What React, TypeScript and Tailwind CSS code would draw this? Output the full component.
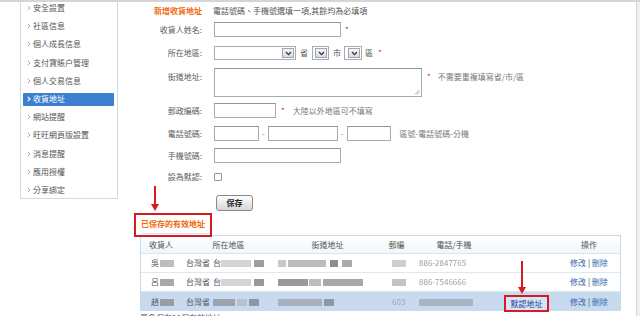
import React from "react";

const navItems = [
  "安全設置",
  "社區信息",
  "個人成長信息",
  "支付寶賬户管理",
  "個人交易信息",
  "收貨地址",
  "網站提醒",
  "旺旺網頁版設置",
  "消息提醒",
  "應用授權",
  "分享綁定",
];

function Chevron({ white }: { white?: boolean }) {
  return (
    <svg width="4" height="6" viewBox="0 0 4 6" className="shrink-0">
      <path d="M0.8 0.8 L3 3 L0.8 5.2" fill="none" stroke={white ? "#ffffff" : "#9aa3ad"} strokeWidth={white ? 1.2 : 0.9} />
    </svg>
  );
}

function SelectBox({ w }: { w: number }) {
  return (
    <div className="h-[14px] border border-[#a7acb3] bg-white flex justify-end items-stretch p-[1px]" style={{ width: w }}>
      <div className="w-[12px] border border-[#9ea6b0] bg-gradient-to-b from-[#f5f6f8] to-[#d9dde3] flex items-center justify-center">
        <svg width="7" height="5" viewBox="0 0 7 5">
          <path d="M1 1 L3.5 3.6 L6 1" fill="none" stroke="#333" strokeWidth="1.3" />
        </svg>
      </div>
    </div>
  );
}

function Input({ w }: { w: number }) {
  return <div className="h-[15px] border border-[#a5abb3] border-t-[#8f959c] bg-white" style={{ width: w }} />;
}

function Star() {
  return <span className="text-[#e02020] text-[8px]">*</span>;
}

function Blur({ w, c = "#c4c4c4", ml = 0 }: { w: number; c?: string; ml?: number }) {
  return <span className="inline-block h-[7px] blur-[0.6px]" style={{ width: w, background: c, marginLeft: ml }} />;
}

function Label({ children, top }: { children: React.ReactNode; top?: boolean }) {
  return (
    <div className={`w-[85px] shrink-0 text-right text-[#5a5a5a] pr-[1px] ${top ? "pt-[5px]" : ""}`}>{children}</div>
  );
}

function Links() {
  return (
    <span className="text-[#3a68ad]">
      修改 <span className="text-[#444]">|</span> 刪除
    </span>
  );
}

const cols = "grid grid-cols-[40px_95px_103px_35px_90px_52px_66px]";

export default function App() {
  return (
    <div className="w-[640px] h-[316px] overflow-hidden bg-white border-t-2 border-[#d3d5d8] flex font-['Noto_Sans_CJK_TC','Noto_Sans',sans-serif] text-[8px] leading-none text-[#555]">
      <div className="w-[20px] shrink-0" />
      {/* sidebar */}
      <aside className="w-[98px] h-[197px] shrink-0 border-x border-b border-[#d3dae1] overflow-hidden">
        <ul className="-mt-[3px] flex flex-col">
          {navItems.map((t) => {
            const active = t === "收貨地址";
            return (
              <li key={t} className="h-[18.2px] shrink-0 flex items-center px-[2px]">
                {active ? (
                  <div className="w-[91px] h-[13px] bg-[#3c7fcf] rounded-[1px] flex items-center gap-[2px] pl-[4px] text-white">
                    <Chevron white />
                    <span>{t}</span>
                  </div>
                ) : (
                  <div className="flex items-center gap-[2px] pl-[4px] text-[#555]">
                    <Chevron />
                    <span>{t}</span>
                  </div>
                )}
              </li>
            );
          })}
        </ul>
      </aside>

      {/* main */}
      <main className="flex-1 relative">
        {/* title */}
        <div className="mt-[2px] h-[14px] flex items-center">
          <Label>
            <span className="text-[#ef6a0d] font-bold">新增收貨地址</span>
          </Label>
          <span className="ml-[10px] text-[#555]">電話號碼、手機號選填一項,其餘均為必填項</span>
        </div>
        {/* name */}
        <div className="mt-[4px] h-[15px] flex items-center">
          <Label>收貨人姓名:</Label>
          <div className="ml-[11px] flex items-center gap-[4px]">
            <Input w={127} />
            <Star />
          </div>
        </div>
        {/* region */}
        <div className="mt-[9px] h-[14px] flex items-center">
          <Label>所在地區:</Label>
          <div className="ml-[11px] flex items-center">
            <SelectBox w={82} />
            <span className="ml-[4px] text-[#555]">省</span>
            <div className="ml-[4px]"><SelectBox w={17} /></div>
            <span className="ml-[4px] text-[#555]">市</span>
            <div className="ml-[3px]"><SelectBox w={18} /></div>
            <span className="ml-[3px] text-[#555]">區</span>
            <span className="ml-[5px]"><Star /></span>
          </div>
        </div>
        {/* street */}
        <div className="mt-[8px] h-[29px] flex items-start">
          <Label top>街道地址:</Label>
          <div className="ml-[11px] flex items-start">
            <div className="relative w-[208px] h-[29px] border border-[#a5abb3] border-t-[#8f959c] bg-white">
              <svg width="6" height="6" viewBox="0 0 6 6" className="absolute right-[1px] bottom-[1px]">
                <path d="M1 5.5 L5.5 1 M3 5.5 L5.5 3" stroke="#999" strokeWidth="0.8" />
              </svg>
            </div>
            <span className="ml-[5px] mt-[5px]"><Star /></span>
            <span className="ml-[7px] mt-[5px] text-[#777]">不需要重複填寫省/市/區</span>
          </div>
        </div>
        {/* zip */}
        <div className="mt-[6px] h-[15px] flex items-center">
          <Label>郵政編碼:</Label>
          <div className="ml-[11px] flex items-center">
            <Input w={62} />
            <span className="ml-[5px]"><Star /></span>
            <span className="ml-[8px] text-[#777]">大陸以外地區可不填寫</span>
          </div>
        </div>
        {/* phone */}
        <div className="mt-[8px] h-[15px] flex items-center">
          <Label>電話號碼:</Label>
          <div className="ml-[11px] flex items-center">
            <Input w={45} />
            <span className="mx-[3px] text-[#777]">-</span>
            <Input w={70} />
            <span className="mx-[3px] text-[#777]">-</span>
            <Input w={44} />
            <span className="ml-[9px] text-[#777]">區號-電話號碼-分機</span>
          </div>
        </div>
        {/* mobile */}
        <div className="mt-[7px] h-[15px] flex items-center">
          <Label>手機號碼:</Label>
          <div className="ml-[11px]">
            <Input w={127} />
          </div>
        </div>
        {/* default */}
        <div className="mt-[7px] h-[14px] flex items-center">
          <Label>設為默認:</Label>
          <div className="ml-[11px] w-[8px] h-[8px] border border-[#8799ad] bg-white rounded-[1px]" />
        </div>
        {/* save */}
        <div className="mt-[11px] h-[16px] flex items-center">
          <div className="w-[85px]" />
          <button className="ml-[13px] w-[37px] h-[16px] rounded-[3px] border border-[#8a8a8a] bg-gradient-to-b from-[#ffffff] to-[#d6d6d6] text-[8px] font-bold text-[#222] leading-none">
            保存
          </button>
        </div>

        {/* tab */}
        <div className="mt-[2px] ml-[16px] w-[78px] h-[22px] relative flex items-center justify-center">
          <span className="text-[#ef6a0d] font-bold">已保存的有效地址</span>
          <div className="absolute left-[8px] right-[2px] bottom-[1px] h-px bg-[#cfe0ec]" />
          <div className="absolute left-0 top-0 w-[78px] h-[24px] border-2 border-[#d51a20]" />
        </div>

        {/* table */}
        <div className="ml-[22px] w-[481px] border-x border-t border-[#c4d9e9]">
          <div className={`${cols} h-[18px] items-center bg-gradient-to-b from-[#ffffff] to-[#f1f6fa] border-b border-[#d9e6f0] text-[#505050]`}>
            <span className="text-center">收貨人</span>
            <span className="text-center">所在地區</span>
            <span className="text-center">街道地址</span>
            <span className="text-center">郵編</span>
            <span className="text-center pr-[10px]">電話/手機</span>
            <span />
            <span className="text-center">操作</span>
          </div>
          {/* row 1 */}
          <div className={`${cols} h-[19px] items-center bg-white border-b border-[#dde8f1] text-[#555]`}>
            <span className="pl-[10px] flex items-center">吳<Blur w={14} c="#bdbdbd" ml={1} /></span>
            <span className="pl-[5px] flex items-center">台灣省<span className="ml-[3px]">台</span><Blur w={30} c="#d4d4d4" /><Blur w={10} c="#9e9e9e" ml={3} /></span>
            <span className="pl-[2px] flex items-center"><Blur w={8} c="#c7c7c7" /><Blur w={38} c="#bcbcbc" ml={2} /><Blur w={8} c="#8e8e8e" ml={4} /><Blur w={10} c="#aaaaaa" ml={4} /></span>
            <span className="pl-[13px] flex items-center"><Blur w={14} c="#cfcfcf" /></span>
            <span className="pl-[5px] text-[#9a9a9a] blur-[0.5px]">886-2847765</span>
            <span />
            <span className="text-center"><Links /></span>
          </div>
          {/* row 2 */}
          <div className={`${cols} h-[19px] items-center bg-white border-b border-[#dde8f1] text-[#555]`}>
            <span className="pl-[10px] flex items-center">呂<Blur w={14} c="#a8a8a8" ml={1} /></span>
            <span className="pl-[5px] flex items-center">台灣省<span className="ml-[3px]">台</span><Blur w={30} c="#d4d4d4" /><Blur w={10} c="#9a9a9a" ml={3} /></span>
            <span className="pl-[2px] flex items-center"><Blur w={30} c="#9a9a9a" /><Blur w={12} c="#bdbdbd" ml={1} /><Blur w={40} c="#a8a8a8" ml={2} /></span>
            <span className="pl-[13px] flex items-center"><Blur w={14} c="#c3c3c3" /></span>
            <span className="pl-[5px] text-[#a0a0a0] blur-[0.5px]">886-7546666</span>
            <span />
            <span className="text-center"><Links /></span>
          </div>
          {/* row 3 */}
          <div className={`${cols} h-[19px] items-center bg-[#c7daf0] text-[#555]`}>
            <span className="pl-[10px] flex items-center">趙<Blur w={14} c="#9a9ca3" ml={1} /></span>
            <span className="pl-[5px] flex items-center">台灣省<Blur w={22} c="#9da3ad" ml={3} /><Blur w={10} c="#b7c2d0" ml={2} /><Blur w={10} c="#8f97a3" ml={2} /></span>
            <span className="pl-[2px] flex items-center"><Blur w={44} c="#a9b1bc" /><Blur w={10} c="#8f97a3" ml={2} /></span>
            <span className="pl-[13px] text-[#9aa3b0] blur-[0.5px]">603</span>
            <span className="pl-[5px] flex items-center"><Blur w={54} c="#aab3c0" /></span>
            <span className="flex items-start self-start pt-[3px]">
              <div className="w-[45px] h-[17px] border-2 border-[#d51a20] bg-[#d6e4f5] flex items-center justify-center text-[#1b3f94]">
                默認地址
              </div>
            </span>
            <span className="text-center"><Links /></span>
          </div>
        </div>
        <div className="ml-[22px] mt-[3px] text-[#555]">最多保存10個有效地址</div>

        {/* arrows */}
        <svg width="10" height="26" viewBox="0 0 10 26" className="absolute left-[32px] top-[184px]">
          <path d="M5 0 V19" stroke="#d51a20" strokeWidth="2" />
          <path d="M1 18 L9 18 L5 25 Z" fill="#d51a20" />
        </svg>
        <svg width="10" height="34" viewBox="0 0 10 34" className="absolute left-[399px] top-[259px]">
          <path d="M5 0 V27" stroke="#d51a20" strokeWidth="2" />
          <path d="M1 26 L9 26 L5 33 Z" fill="#d51a20" />
        </svg>
      </main>

      <div className="w-[4px] shrink-0 border-l border-[#d3d6da] bg-[#eef0f2]" />
    </div>
  );
}
